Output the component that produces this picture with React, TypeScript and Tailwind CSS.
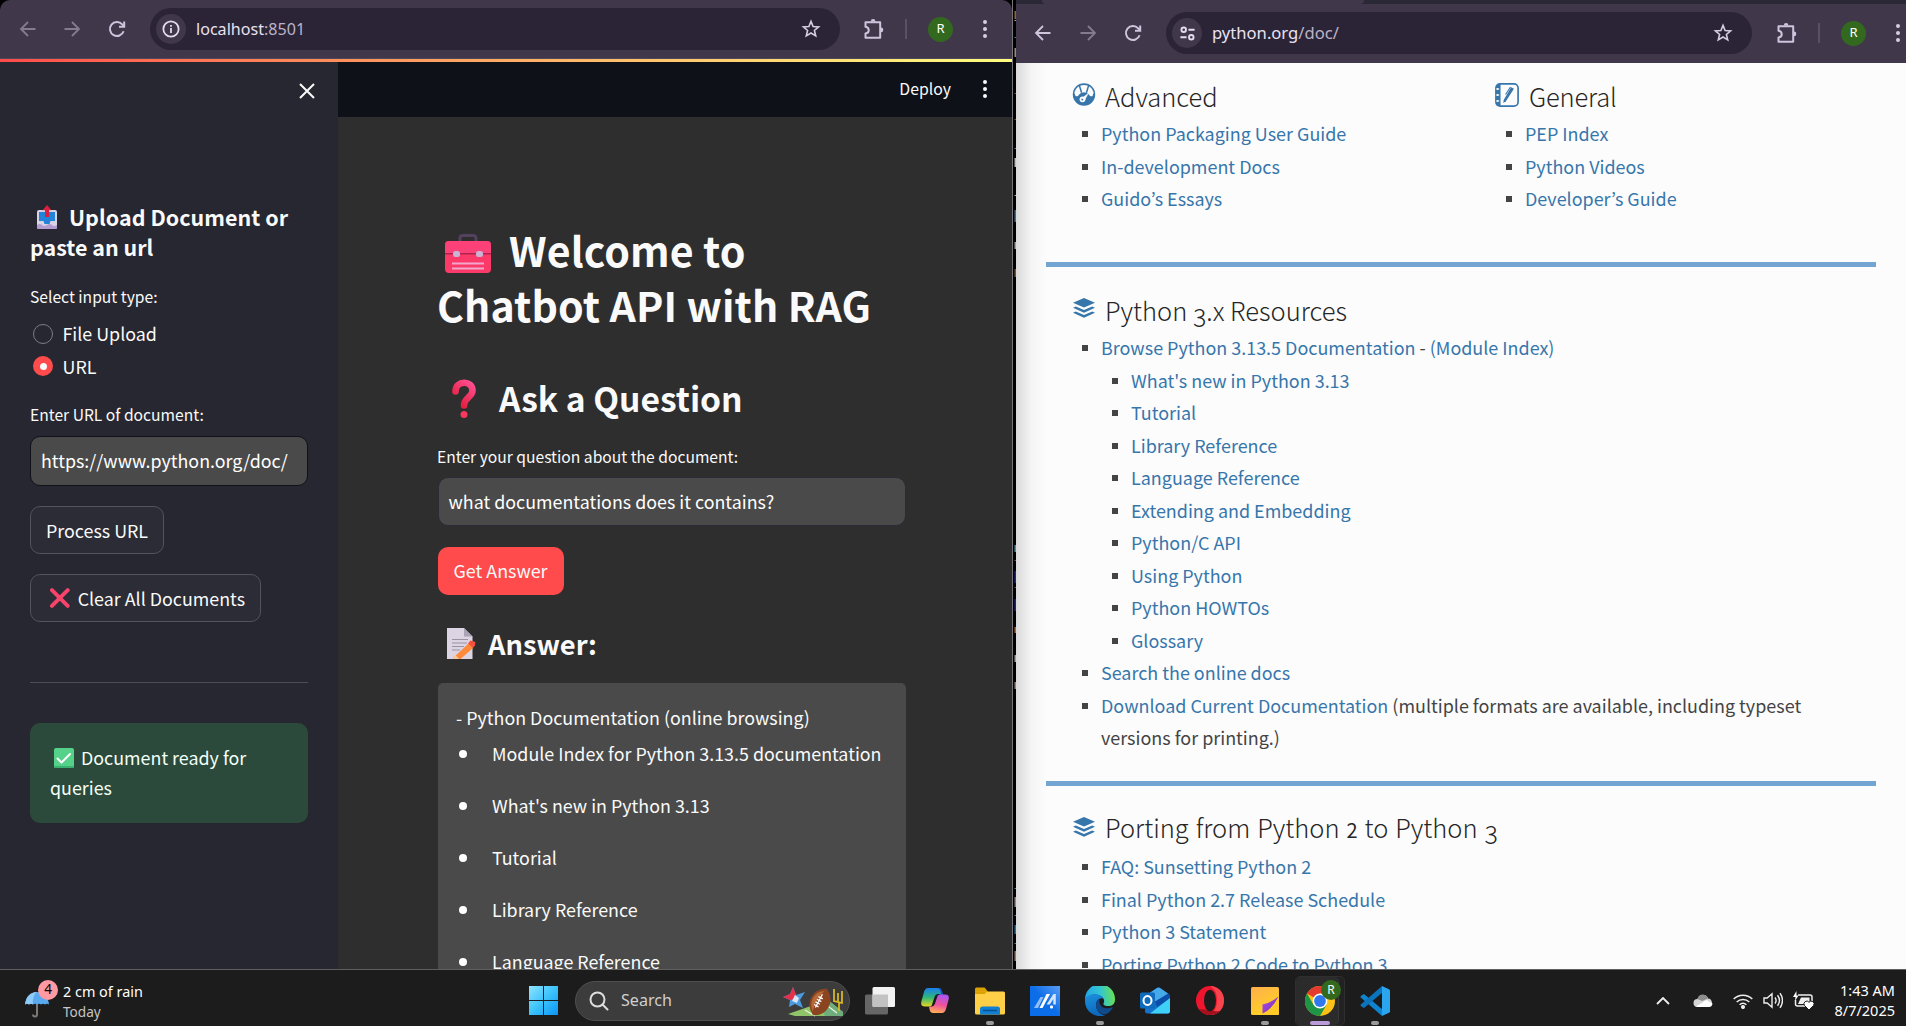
import React from 'react';

const SOURCE = 'font-["Noto_Sans_CJK_KR","Noto_Sans",sans-serif]';
const SEGOE = 'font-["Noto_Sans","Open_Sans",sans-serif]';

/* ---------- browser chrome icons ---------- */

function Arrow({ dim = false, flip = false }: { dim?: boolean; flip?: boolean }) {
  return (
    <svg viewBox="0 0 20 20" className={`size-5 shrink-0 ${dim ? 'text-[#857b90]' : 'text-[#cfc4dc]'} ${flip ? 'rotate-180' : ''}`} fill="none" stroke="currentColor" strokeWidth="1.8">
      <path d="M17.5 10H3.5M10 3L3 10l7 7" />
    </svg>
  );
}

function Reload() {
  return (
    <svg viewBox="0 0 20 20" className="size-5 shrink-0 text-[#cfc4dc]" fill="none" stroke="currentColor" strokeWidth="2">
      <path d="M16.6 12.2A7 7 0 1 1 15.2 5.3L17 7.2" />
      <path d="M17.2 2.6v5.2H12" />
    </svg>
  );
}

function Star() {
  return (
    <svg viewBox="0 0 20 20" className="size-5 shrink-0 text-[#d5cde0]" fill="none" stroke="currentColor" strokeWidth="1.6">
      <path d="M10 2.4l2.1 5.1 5.5.4-4.2 3.6 1.3 5.4-4.7-2.9-4.7 2.9 1.3-5.4-4.2-3.6 5.5-.4z" />
    </svg>
  );
}

function Puzzle() {
  return (
    <svg viewBox="0 0 22 22" className="size-[22px] shrink-0 text-[#cfc4dc]" fill="none" stroke="currentColor" strokeWidth="2" strokeLinejoin="round">
      <path d="M2.5 4.2H17.2V19.8H2.5V15.6C6.8 14.8 6.8 9.6 2.5 8.8Z" />
      <path d="M7.8 3.4a2.3 2.3 0 0 1 4.6 0zM18 9.6a2.3 2.3 0 0 1 0 4.6z" fill="currentColor" stroke="none" />
    </svg>
  );
}

function Dots({ className }: { className: string }) {
  return (
    <svg viewBox="0 0 4 20" className={className} fill="currentColor">
      <circle cx="2" cy="3" r="2" />
      <circle cx="2" cy="10" r="2" />
      <circle cx="2" cy="17" r="2" />
    </svg>
  );
}

function InfoIcon() {
  return (
    <svg viewBox="0 0 20 20" className="size-[18px]" fill="none" stroke="#e4dcec" strokeWidth="2">
      <circle cx="10" cy="10" r="8.5" />
      <path d="M10 9v5.5M10 5.5v2" />
    </svg>
  );
}

function TuneIcon() {
  return (
    <svg viewBox="0 0 18 18" className="size-[17px]" fill="none" stroke="#e4dcec" strokeWidth="2">
      <circle cx="5" cy="5" r="2.4" />
      <path d="M10 5h6.5M1.5 13H8" />
      <circle cx="13" cy="13" r="2.4" />
    </svg>
  );
}

function Omnibox({ host, rest, icon, className }: { host: string; rest: string; icon: React.ReactNode; className: string }) {
  return (
    <div className={`flex h-[42px] items-center rounded-full bg-[#2b2436] pl-[6px] pr-[19px] ${className}`}>
      <div className="flex size-[30px] items-center justify-center rounded-full bg-[#40374b]">{icon}</div>
      <div className={`ml-[10px] flex-1 text-[#e9e2f0] ${SEGOE}`}>
        {host}
        <span className="text-[#bcb2c8]">{rest}</span>
      </div>
      <Star />
    </div>
  );
}

function ToolbarEnd() {
  return (
    <>
      <Puzzle />
      <div className="ml-5 h-5 w-0.5 shrink-0 bg-[#5b5167]" />
      <div className={`ml-[21px] flex size-[25px] shrink-0 items-center justify-center rounded-full bg-[#33691e] text-[13px] text-white ${SEGOE}`}>R</div>
      <Dots className="ml-[30px] h-[20px] w-1 shrink-0 text-[#d5cde0]" />
    </>
  );
}

/* ---------- emoji drawings ---------- */

function Outbox() {
  return (
    <svg viewBox="0 0 20 24" className="ml-[7px] mr-[12px] inline-block h-6 w-5 align-[-3px]">
      <rect y="5" width="20" height="19" rx="2" fill="#d9d3e6" />
      <path d="M2 7h16v9h-4.500l-1 3h-5l-1-3H2z" fill="#2383d8" />
      <path d="M0 20q3-2 5 0t5 0 5 0 5 0v3a1 1 0 0 1-1 1H1a1 1 0 0 1-1-1z" fill="#b39ccf" />
      <path d="M10 0l4.500 5.200h-2.500V12H8V5.200H5.500z" fill="#d9213f" />
    </svg>
  );
}

function Toolbox() {
  return (
    <svg viewBox="0 0 46 40" className="ml-2 mr-[18px] inline-block h-10 w-[46px] align-[-7px]">
      <path d="M15 8V4a2.500 2.500 0 0 1 2.500-2.500h11A2.500 2.500 0 0 1 31 4v4" fill="none" stroke="#54405f" strokeWidth="3" />
      <rect y="7" width="46" height="32" rx="4" fill="#fb3a6a" />
      <path d="M0 11a4 4 0 0 1 4-4h38a4 4 0 0 1 4 4v8H0z" fill="#fc4078" />
      <path d="M0 19h46v1.600H0z" fill="#b3224f" />
      <rect x="8" y="17" width="7" height="6" rx="2.500" fill="#c9b4d4" />
      <rect x="31" y="17" width="7" height="6" rx="2.500" fill="#c9b4d4" />
      <path d="M7 29.500h32M7 34.500h32" stroke="#f4a6cb" strokeWidth="1.800" />
    </svg>
  );
}

function QuestionMark() {
  return (
    <svg viewBox="0 0 24 39" className="ml-[14px] mr-[23px] inline-block h-[39px] w-6 align-[-6px]">
      <defs>
        <linearGradient id="qm" x1="1" y1="0" x2="0.300" y2="1">
          <stop offset="0" stopColor="#ff4f93" />
          <stop offset="1" stopColor="#e31f3d" />
        </linearGradient>
      </defs>
      <path d="M3.500 12.500C3.500 1 20.500 1 20.500 11.500c0 7-8.500 6.500-8.500 15" fill="none" stroke="url(#qm)" strokeWidth="6.600" strokeLinecap="round" />
      <circle cx="12" cy="35.500" r="3.500" fill="#f8385c" />
    </svg>
  );
}

function Memo() {
  return (
    <svg viewBox="0 0 29 32" className="ml-[9px] mr-[12px] inline-block h-8 w-[29px] align-[-5px]">
      <path d="M0 0h17l8.500 8.500V31H0z" fill="#dcd3e3" />
      <path d="M17 0l8.500 8.500H17z" fill="#aaa2b5" />
      <path d="M5 11.500h16M5 15h15M5 18.500h12M5 22h8" stroke="#9a92a5" strokeWidth="1.200" />
      <path d="M21.500 15.500l4.800 4.200L13.500 31H7l-1-1z" fill="#ff8a3c" />
      <path d="M21 15.500l2.500-3 4.900 1.500-.4 3.500-2.200 2.500z" fill="#f4523b" />
      <path d="M6 31l2-4.500 4 4.500z" fill="#f7c9a0" />
    </svg>
  );
}

function CrossMark() {
  return (
    <svg viewBox="0 0 20 20" className="ml-[4px] mr-2 size-5">
      <path d="M2 2l16 16M18 2L2 18" stroke="#f8436b" strokeWidth="4" strokeLinecap="round" />
    </svg>
  );
}

function CheckBox() {
  return (
    <svg viewBox="0 0 20 20" className="ml-1 mr-[7px] inline-block size-5 align-[-3px]">
      <rect width="20" height="20" rx="2" fill="#55d18a" />
      <path d="M0 18h20v1a1 1 0 0 1-1 1H1a1 1 0 0 1-1-1z" fill="#3bb272" />
      <path d="M3.500 10.500l4 4 8.500-8.500" fill="none" stroke="#fff" strokeWidth="2" strokeLinecap="round" strokeLinejoin="round" />
    </svg>
  );
}

/* ---------- chatbot window ---------- */

function Sidebar() {
  return (
    <aside className="flex w-[338px] shrink-0 flex-col bg-[#262730] pl-[30px] pr-[30px] text-[17.86px] text-[#fafafa]">
      <div className="-mr-[9px] flex h-[58px] items-center justify-end">
        <svg viewBox="0 0 20 20" className="size-5" stroke="#fafafa" strokeWidth="2" fill="none">
          <path d="M3 3l14 14M17 3L3 17" />
        </svg>
      </div>
      <h3 className="mt-[82px] whitespace-nowrap text-[21.45px] font-bold leading-[30px]">
        <Outbox />
        <span className="tracking-[0.05px]">Upload Document or</span>
        <br />
        paste an url
      </h3>
      <div className="mt-[23px] text-[15.65px] leading-6">Select input type:</div>
      <div className="mt-[8px] flex h-[33px] items-center pl-[3px]">
        <span className="size-5 rounded-full border border-[#7c7d84] bg-[#262730]" />
        <span className="-mt-px ml-[9.5px] leading-6">File Upload</span>
      </div>
      <div className="flex h-8 items-center pl-[3px]">
        <span className="flex size-5 items-center justify-center rounded-full bg-[#ff4b4b]">
          <span className="size-[7px] rounded-full bg-[#fafafa]" />
        </span>
        <span className="-mt-px ml-[9.5px] leading-6">URL</span>
      </div>
      <div className="mt-[21px] text-[15.65px] leading-6">Enter URL of document:</div>
      <div className="mt-[9px] flex h-[50px] items-center rounded-[10px] border border-[#0e1117] bg-[#4a4a4a] px-[10px] pb-[2px] leading-6 text-white">https://www.python.org/doc/</div>
      <button className="mt-5 flex h-12 w-[134px] items-center whitespace-nowrap rounded-[10px] border border-[#52535b] bg-[#2b2c36] px-[15px] pb-[1px] leading-6">Process URL</button>
      <button className="mt-5 flex h-12 w-[231px] items-center whitespace-nowrap rounded-[10px] border border-[#52535b] bg-[#2b2c36] px-[15px] pb-[1px] leading-6">
        <CrossMark />
        Clear All Documents
      </button>
      <hr className="mt-[60px] border-[#4c4d56]" />
      <div className="mt-10 h-[100px] rounded-[10px] bg-[#2b4a3b] px-5 pt-[19px] leading-[30px] text-[#f4fff8]">
        <CheckBox />
        Document ready for
        <br />
        queries
      </div>
    </aside>
  );
}

const ANSWERS = ['Module Index for Python 3.13.5 documentation', "What's new in Python 3.13", 'Tutorial', 'Library Reference', 'Language Reference'];

function ChatMain() {
  return (
    <main className="flex flex-1 flex-col bg-[#2e2e2e] text-[17.86px] text-[#fafafa]">
      <header className="flex h-[55px] shrink-0 items-center justify-end bg-[#0e1117] pb-[1px] pr-[25px]">
        <span className="text-[15.8px] leading-6">Deploy</span>
        <Dots className="ml-[32px] h-[20px] w-1 text-[#fafafa]" />
      </header>
      <div className="ml-[100px] flex w-[468px] flex-col">
        <h1 className="mt-[105px] -ml-px whitespace-nowrap text-[41.1px] font-bold leading-[55px] tracking-[0.09px]">
          <Toolbox />
          Welcome to
          <br />
          Chatbot API with RAG
        </h1>
        <h2 className="mt-[44px] h-11 whitespace-nowrap text-[33.6px] font-bold leading-[44px]">
          <QuestionMark />
          Ask a Question
        </h2>
        <div className="mt-[25px] -ml-px text-[15.65px] leading-6">Enter your question about the document:</div>
        <div className="mt-[8px] flex h-[49px] items-center rounded-[10px] border border-[#2b2b38] bg-[#4a4a4a] px-[9.5px] pb-[2px] leading-6 text-white">what documentations does it contains?</div>
        <button className="mt-[21px] flex h-12 w-[126px] items-center justify-center rounded-[10px] bg-[#ff4b4b] pb-[2px] pr-[1px] leading-6">Get Answer</button>
        <h3 className="mt-[30px] h-9 text-[27.3px] font-bold leading-9">
          <Memo />
          Answer:
        </h3>
        <div className="mt-[22px] rounded-t-[5px] bg-[#4a4a4a] pl-[18px] pt-[18px] leading-8">
          <p>- Python Documentation (online browsing)</p>
          <ul className="mt-[4px] flex flex-col gap-5">
            {ANSWERS.map((a) => (
              <li key={a} className="flex items-center whitespace-nowrap">
                <span className="ml-[3px] mr-[25px] mt-[2px] size-[8px] shrink-0 rounded-full bg-white" />
                {a}
              </li>
            ))}
          </ul>
        </div>
      </div>
    </main>
  );
}

function ChatWindow() {
  return (
    <section className="flex h-full w-[1013px] shrink-0 flex-col overflow-hidden border-r border-[#77757a]">
      <div className="flex h-[59px] shrink-0 items-center rounded-t-[10px] border-b border-[#4f4858] bg-[#40374b] pl-[18px]">
        <Arrow dim />
        <div className="w-[24px]" />
        <Arrow dim flip />
        <div className="w-[25px]" />
        <Reload />
        <Omnibox className="ml-[23px] w-[690px] text-[16.1px]" host="localhost" rest=":8501" icon={<InfoIcon />} />
        <div className="ml-[23px] flex items-center">
          <ToolbarEnd />
        </div>
      </div>
      <div className="h-[3px] shrink-0 bg-linear-to-r from-[#ff4b4b] to-[#fffd80]" />
      <div className="flex min-h-0 flex-1 overflow-hidden">
        <Sidebar />
        <ChatMain />
      </div>
    </section>
  );
}

/* Thin strip of an editor visible between the two windows. */
function EditorSliver() {
  const marks: [number, number, string][] = [
    [11, 8, '#b07a2c'], [20, 1, '#ccc'], [37, 1, '#4d9dc4'], [48, 9, '#b5a58a'], [93, 1, '#9a5a30'], [119, 1, '#9a5a30'],
    [148, 1, '#4d9dc4'], [158, 9, '#ddd'], [195, 1, '#ccc'], [210, 12, '#4a7f9a'], [242, 7, '#bbb'], [269, 8, '#8a6320'],
    [545, 7, '#4da6c4'], [560, 1, '#9a5a30'], [571, 12, '#2323a8'], [587, 1, '#9a5a30'], [599, 12, '#2323a8'], [627, 6, '#d07028'],
    [655, 7, '#bba'], [682, 7, '#a98'], [888, 1, '#4d9dc4'], [897, 10, '#aaa09a'], [915, 1, '#4d9dc4'], [925, 9, '#1683b8'], [943, 1, '#4d9dc4'], [951, 10, '#b98a70'],
  ];
  return (
    <svg viewBox="0 0 3 969" className="h-full w-[3px] shrink-0 bg-black">
      {marks.map(([y, h, c]) => (
        <rect key={y} x="1.500" y={y} width="1.500" height={h} fill={c} opacity="0.850" />
      ))}
    </svg>
  );
}

/* ---------- python.org window ---------- */

function GaugeIcon() {
  return (
    <svg viewBox="0 0 24 24" className="size-[24px]">
      <circle cx="12" cy="11.500" r="11.200" fill="#3776ab" />
      <path d="M2.300 9.500A10 10 0 0 1 21.700 9.500L20.500 13Q18 14 17.300 12 15.500 9.200 12 9.200T6.700 12Q6 14 3.500 13z" fill="#fcfcfc" />
      <path d="M7.300 2.200l2.300 7.600M16.700 2.200l-2.300 7.600" stroke="#3776ab" strokeWidth="1.500" />
      <circle cx="10.500" cy="16.300" r="2.900" fill="#fcfcfc" />
      <circle cx="10.300" cy="16.500" r="1" fill="#3776ab" />
      <path d="M17 9.500l-4.300 8-2.800-2.500z" fill="#fcfcfc" />
    </svg>
  );
}

function NotebookIcon() {
  return (
    <svg viewBox="0 0 26 26" className="size-[26px]">
      <rect x="1" y="1" width="24" height="24" rx="4.500" fill="#fcfcfc" stroke="#3776ab" strokeWidth="1.800" />
      <path d="M5 1h1v24H5A4 4 0 0 1 1 21V5a4 4 0 0 1 4-4z" fill="#3776ab" />
      <path d="M1 6.500h3.500M1 13h3.500M1 19.500h3.500M3 5.300v2.400M3 11.800v2.400M3 18.300v2.400" stroke="#fcfcfc" strokeWidth="1.300" />
      <path d="M17.500 4.500l3 1.700-8.700 13.600-2.800 2 .4-3.500z" fill="#3776ab" />
      <path d="M16.800 4.300L11.500 12.500" stroke="#3776ab" strokeWidth="1.200" />
    </svg>
  );
}

function StackIcon() {
  return (
    <svg viewBox="0 0 24 24" className="h-[24px] w-[24px]" fill="#3776ab">
      <path d="M12 1l11 4.800-11 4.800L1 5.800z" />
      <path d="M1 10.800l2.800-1.200L12 13l8.200-3.400L23 10.800 12 15.800z" />
      <path d="M1 15.800l2.800-1.300L12 18l8.200-3.500L23 15.800 12 20.700z" />
    </svg>
  );
}

/* Old-style three: full height, hanging below the baseline. */
function Three() {
  return <span className="relative top-[6px] text-[25px]">3</span>;
}

function Heading({ icon, children }: { icon: React.ReactNode; children: React.ReactNode }) {
  return (
    <h2 className="flex h-9 items-center text-[25.5px] font-light leading-9 text-[#262626]">
      <span className="mr-[9px] flex w-6 justify-center">{icon}</span>
      <span className="mt-[2px] whitespace-pre">{children}</span>
    </h2>
  );
}

function Item({ children, nested = false }: { children: React.ReactNode; nested?: boolean }) {
  return (
    <li className={`flex text-[#3776ab] ${nested ? 'pl-10' : 'pl-[10px]'}`}>
      <span className="mr-[13px] mt-[14px] size-[6px] shrink-0 bg-[#444]" />
      <span>{children}</span>
    </li>
  );
}

const NESTED = ["What's new in Python 3.13", 'Tutorial', 'Library Reference', 'Language Reference', 'Extending and Embedding', 'Python/C API', 'Using Python', 'Python HOWTOs', 'Glossary'];

function PythonWindow() {
  return (
    <section className="flex h-full flex-1 flex-col overflow-hidden">
      <div className="h-[4px] shrink-0 bg-[#2b2835] pl-[26px] pr-[542px]">
        <div className="h-full rounded-b-sm bg-[#40374b]" />
      </div>
      <div className="flex h-[59px] shrink-0 items-center bg-[#40374b] pb-[1px] pl-[17px]">
        <Arrow />
        <div className="w-[25px]" />
        <Arrow dim flip />
        <div className="w-[25px]" />
        <Reload />
        <Omnibox className="ml-[23px] w-[586px] shrink-0 text-[16.6px]" host="python.org" rest="/doc/" icon={<TuneIcon />} />
        <div className="ml-[24px] flex items-center">
          <ToolbarEnd />
        </div>
      </div>
      <div className="flex min-h-0 flex-1 bg-[#fcfcfc]">
        <div className="w-[30px] shrink-0 bg-linear-to-r from-[#d9d9d9] via-[#f4f4f4] to-[#fcfcfc]" />
        <div className="flex w-[830px] shrink-0 flex-col text-[17.94px] leading-[32.5px]">
          <div className="mt-[14px] flex shrink-0 pl-[26px]">
            <div className="w-[423px]">
              <Heading icon={<GaugeIcon />}>Advanced</Heading>
              <ul className="mt-[4px]">
                <Item>Python Packaging User Guide</Item>
                <Item>In-development Docs</Item>
                <Item>Guido’s Essays</Item>
              </ul>
            </div>
            <div>
              <Heading icon={<NotebookIcon />}>
                <span className="ml-[1px] -tracking-[0.2px]">General</span>
              </Heading>
              <ul className="mt-[4px] pl-[1px]">
                <Item>PEP Index</Item>
                <Item>Python Videos</Item>
                <Item>Developer’s Guide</Item>
              </ul>
            </div>
          </div>
          <div className="mt-[47.5px] h-[5px] shrink-0 bg-[#73a5d3]" />
          <div className="mt-[24px] shrink-0 pl-[26px]">
            <Heading icon={<StackIcon />}>
              Python <Three />.x Resources
            </Heading>
            <ul className="mt-[4.4px]">
              <Item>
                Browse Python 3.13.5 Documentation <span className="text-[#444]">-</span> (Module Index)
              </Item>
              {NESTED.map((t) => (
                <Item key={t} nested>
                  {t}
                </Item>
              ))}
              <Item>Search the online docs</Item>
              <Item>
                Download Current Documentation{' '}
                <span className="text-[#444]">
                  (multiple formats are available, including typeset
                  <br />
                  versions for printing.)
                </span>
              </Item>
            </ul>
          </div>
          <div className="mt-[27.1px] h-[5px] shrink-0 bg-[#73a5d3]" />
          <div className="mt-[24px] shrink-0 pl-[26px]">
            <Heading icon={<StackIcon />}>
              <span className="[word-spacing:1.3px]">
                Porting from Python <span className="text-[20px] font-normal">2</span> to Python <Three />
              </span>
            </Heading>
            <ul className="mt-[4.4px]">
              <Item>FAQ: Sunsetting Python 2</Item>
              <Item>Final Python 2.7 Release Schedule</Item>
              <Item>Python 3 Statement</Item>
              <Item>Porting Python 2 Code to Python 3</Item>
            </ul>
          </div>
        </div>
      </div>
    </section>
  );
}

/* ---------- taskbar ---------- */

function WindowsLogo() {
  return (
    <svg viewBox="0 0 29 29" className="size-[29px]">
      <defs>
        <linearGradient id="win" gradientUnits="userSpaceOnUse" x1="0" y1="0" x2="29" y2="29">
          <stop offset="0" stopColor="#8fe3ff" />
          <stop offset="0.500" stopColor="#3cc3fb" />
          <stop offset="1" stopColor="#0a95f5" />
        </linearGradient>
      </defs>
      <path d="M0 0h14v14H0zM15 0h14v14H15zM0 15h14v14H0zM15 15h14v14H15z" fill="url(#win)" />
    </svg>
  );
}

function FootballArt() {
  return (
    <svg viewBox="0 0 62 32" className="h-8 w-[62px]">
      <path d="M5 29l40-14 15 12v4H12z" fill="#8fc46a" />
      <path d="M45 15l15 12v4H42l-6-12z" fill="#6fae7c" />
      <path d="M22 25l10 6M42 19l12 9" stroke="#e8f6dc" strokeWidth="1.200" />
      <path d="M10 2l3 8 9-3-5 8 3 8-8-4-6 3 1-7-7-3 7-3z" fill="#4a9be0" />
      <path d="M10 2l3 8-2 4-4 1-7-3 7-3z" fill="#e33149" />
      <path d="M12 10l4 3-2 5-5-2z" fill="#dbe4f3" />
      <g transform="rotate(-62 37 17)">
        <path d="M22 17Q28 6.500 38 7t14 10Q46 27.500 36 27T22 17z" fill="#8b4420" />
        <path d="M25 15Q31 8.500 38 9t11 7Q40 11.500 25 15z" fill="#b66a39" />
        <path d="M30 15.500h15M32 13v5M35 13v5M38 13v5M41 13v5" stroke="#fff" strokeWidth="1.300" />
      </g>
      <path d="M51 4v12l8 2V6M55 8v9M56 17v9" fill="none" stroke="#e0bd25" strokeWidth="1.700" />
    </svg>
  );
}

function TaskView() {
  return (
    <svg viewBox="0 0 30 28" className="h-7 w-[30px]">
      <rect y="7.500" width="23" height="20" rx="1.500" fill="#666" />
      <rect x="7.500" width="22.500" height="20" rx="1.500" fill="#f2f2f2" />
      <path d="M7.500 7.500H23v12.500H9a1.500 1.500 0 0 1-1.500-1.500z" fill="#c2c2c2" />
    </svg>
  );
}

function Copilot() {
  return (
    <svg viewBox="0 0 28 25" className="h-[25px] w-7">
      <defs>
        <linearGradient id="cpa" x1="0" y1="0" x2="0" y2="1">
          <stop offset="0" stopColor="#1a7ff0" />
          <stop offset="0.500" stopColor="#2cb67c" />
          <stop offset="1" stopColor="#e9d520" />
        </linearGradient>
        <linearGradient id="cpb" x1="0.600" y1="0" x2="0.400" y2="1">
          <stop offset="0" stopColor="#a955f0" />
          <stop offset="0.550" stopColor="#f0529b" />
          <stop offset="1" stopColor="#ffb057" />
        </linearGradient>
      </defs>
      <path d="M10 7h9l-1-4Q17 .500 15 .500l4-.500q1 0 2 3l1.500 4.500z" fill="#1554c0" />
      <path d="M7 0h9q2.500 0 3.300 3L20 6h-3q-2.500 0-3.500 3l-2.600 8q-.700 1.500-2.500 1.500H4Q-1 18.500.500 13L3 4Q4.200 0 7 0z" fill="url(#cpa)" />
      <path d="M21 25h-9q-2.500 0-3.300-3L8 18.500h2.500q2.500 0 3.500-3l2.600-7.500Q17.300 6.500 19 6.500h5Q29 6.500 27.500 12L25 21q-1.200 4-4 4z" fill="url(#cpb)" />
    </svg>
  );
}

function Folder() {
  return (
    <svg viewBox="0 0 30 28" className="h-7 w-[30px]">
      <path d="M0 2a1.500 1.500 0 0 1 1.500-1.500h8L12.500 4v4H0z" fill="#dba100" />
      <rect y="4.500" width="30" height="23" rx="1.500" fill="#ffcf48" />
      <path d="M0 7h9.500l3-2.800H0z" fill="#dba100" />
      <path d="M5 27.500V22a2.500 2.500 0 0 1 2.500-2.500h15A2.500 2.500 0 0 1 25 22v5.500z" fill="#1180d2" />
      <path d="M8 23.500h14" stroke="#0a4f93" strokeWidth="1.500" />
    </svg>
  );
}

function Armoury() {
  return (
    <svg viewBox="0 0 30 30" className="size-[30px]">
      <defs>
        <linearGradient id="arm" x1="0" y1="1" x2="1" y2="0">
          <stop offset="0.500" stopColor="#0b6de8" />
          <stop offset="1" stopColor="#5b9df5" />
        </linearGradient>
      </defs>
      <rect width="30" height="30" fill="url(#arm)" />
      <path d="M4 22L10.500 11h3L8 22z" fill="#8fbdf8" />
      <path d="M9.500 22l7-14H20l-7.500 14z" fill="#fff" />
      <path d="M16.500 18.500L23.500 8h2.300v10.500h-2.500V13l-3.500 5.500z" fill="#d3e4fc" />
      <rect x="20" y="19.500" width="3" height="3" rx="1" fill="#fff" />
    </svg>
  );
}

function Edge() {
  return (
    <svg viewBox="0 0 30 30" className="size-[30px]">
      <defs>
        <linearGradient id="ega" x1="0" y1="0.500" x2="1" y2="0.400">
          <stop offset="0" stopColor="#22a5e6" />
          <stop offset="0.500" stopColor="#32c3d4" />
          <stop offset="1" stopColor="#69e34d" />
        </linearGradient>
        <linearGradient id="egb" x1="0" y1="0" x2="0.300" y2="1">
          <stop offset="0" stopColor="#1c93df" />
          <stop offset="1" stopColor="#0d67bd" />
        </linearGradient>
      </defs>
      <path d="M0 13A15 15 0 0 1 30 13.500C30 19 26 20 23.500 20 20 20 18 19 18.500 17.500 21 13 16 8.500 10 8.500 5 8.500 1 11 0 15z" fill="url(#ega)" />
      <path d="M0 15C0 10.500 5 8.300 9.500 8.300c5.500 0 8.500 2.500 8.800 4.200C14 11.500 11 15 11 19c0 6 5 10 9 10.300A15 15 0 0 1 0 15z" fill="url(#egb)" />
      <path d="M14.500 12.500C12 14 11 16.500 11 19c0 5 4 8.500 8 9.500 4-.5 7.500-4 8.500-6.500.4-.8-.4-1-1-.6-6 2.600-13.500.1-12-8.900z" fill="#114a8b" />
    </svg>
  );
}

function Outlook() {
  return (
    <svg viewBox="0 0 30 27" className="h-[27px] w-[30px]">
      <path d="M5 9L17 1q1.500-1 3 0l10 7v16a2.500 2.500 0 0 1-2.500 2.500h-20A2.500 2.500 0 0 1 5 24z" fill="#1272cd" />
      <path d="M5 9L17 1q1.500-1 3 0l8 5.500L15 15z" fill="#45a9ea" />
      <path d="M15 14.500L28.500 6.500 30 8v3.500L17 20z" fill="#0b4da8" />
      <path d="M30 11v13a2.500 2.500 0 0 1-2.500 2.500H10z" fill="#3fd0f7" />
      <rect y="5.500" width="15" height="16" rx="1.500" fill="#0f6cbd" />
      <ellipse cx="7.500" cy="13.500" rx="4" ry="4.500" fill="none" stroke="#fff" strokeWidth="2" />
    </svg>
  );
}

function Opera() {
  return (
    <svg viewBox="0 0 28 29" className="h-[29px] w-7">
      <ellipse cx="14" cy="14.500" rx="14" ry="14.500" fill="#f0152e" />
      <path d="M14 0q6 0 10.500 4.500Q28 9 28 14.500T24.500 24.500Q20 29 14 29q7-4 7-14.500T14 0z" fill="#f8444c" />
      <path d="M3 23q4.500 6 11 6 6 0 10-4-6 1-9.500-1z" fill="#a6101c" />
      <ellipse cx="14" cy="14.500" rx="6" ry="10.800" fill="#1c1c1c" />
    </svg>
  );
}

function StickyNote() {
  return (
    <svg viewBox="0 0 28 28" className="size-7">
      <defs>
        <linearGradient id="stk" x1="0" y1="0" x2="0.500" y2="1">
          <stop offset="0" stopColor="#ffaf4a" />
          <stop offset="1" stopColor="#ffd226" />
        </linearGradient>
        <linearGradient id="stp" x1="0" y1="0" x2="1" y2="1">
          <stop offset="0" stopColor="#b84cf0" />
          <stop offset="1" stopColor="#6b2fa8" />
        </linearGradient>
      </defs>
      <rect width="28" height="28" rx="1.500" fill="url(#stk)" />
      <path d="M28 10v16.500a1.500 1.500 0 0 1-1.500 1.500H12q11-6 16-18z" fill="#ffc928" />
      <path d="M27.500 9.500Q18 17 11.500 17.500v9q10-4.500 16-17z" fill="url(#stp)" />
    </svg>
  );
}

function Chrome() {
  return (
    <svg viewBox="0 0 30 30" className="size-[30px] shrink-0">
      <circle cx="15" cy="15" r="15" fill="#fbc116" />
      <path d="M15 15L2 7.500A15 15 0 0 1 28 7.500H15z" fill="#e33b2e" />
      <path d="M2 7.500A15 15 0 0 0 15 30l6.500-11.300L15 15 8.500 18.700z" fill="#1e9447" />
      <circle cx="15" cy="15" r="7.400" fill="#fff" />
      <circle cx="15" cy="15" r="5.900" fill="#2f78ee" />
    </svg>
  );
}

function VsCode() {
  return (
    <svg viewBox="0 0 30 30" className="size-[30px]">
      <path d="M1.500 9.500L4 8l18.500 15.500L22 30 .800 11.500q-.8-1 .7-2z" fill="#0e83cf" />
      <path d="M1.500 20.500L4 22 22.500 6.500 22 0 .800 18.500q-.8 1 .7 2z" fill="#0a74bd" />
      <path d="M22 0l7 3.200q1 .5 1 1.600v20.400q0 1.100-1 1.600L22 30z" fill="#2aa5ee" />
    </svg>
  );
}

function Umbrella() {
  return (
    <svg viewBox="0 0 24 26" className="h-[26px] w-6">
      <path d="M12 11v11.500q0 2-2 2t-2-2" fill="none" stroke="#7d7977" strokeWidth="2" />
      <path d="M12 0q10.500.500 12 12.500-2-1.500-4 0-2-1.500-4 0-2-1.500-4 0-2-1.500-4 0-2-1.500-4 0-2-1.500-4 0Q1.500.500 12 0z" fill="#58a9ee" />
      <path d="M12 0Q7 4 8 12.500q-2-1.500-4 0-2-1.500-4 0Q1.500.500 12 0z" fill="#8ecbf8" />
    </svg>
  );
}

function PinnedApp({ icon, running = false }: { icon: React.ReactNode; running?: boolean }) {
  return (
    <div className="flex h-[50px] w-[55px] flex-col items-center">
      <div className="flex h-[50px] items-center">{icon}</div>
      <div className={`-mt-[5px] h-1 w-2 shrink-0 rounded-full ${running ? 'bg-[#9a9a9a]' : ''}`} />
    </div>
  );
}

function Tray() {
  return (
    <>
      <svg viewBox="0 0 14 8" className="h-2 w-[14px]" fill="none" stroke="#eee" strokeWidth="1.800">
        <path d="M1 7l6-6 6 6" />
      </svg>
      <svg viewBox="0 0 20 13" className="ml-[23px] h-[13px] w-5">
        <path d="M4.500 5A5.500 5.500 0 0 1 15 4.500 4.300 4.300 0 0 1 15.500 13h-11a4 4 0 0 1 0-8z" fill="#d5d5d5" />
        <path d="M4.500 5A5.500 5.500 0 0 1 15 4.500L9 7z" fill="#8d8d8d" />
        <path d="M3 12.500L13.500 6l6 3.500q-.5 3.500-4 3.500h-11z" fill="#fff" />
      </svg>
      <svg viewBox="0 0 20 16" className="ml-5 h-4 w-5" fill="none" stroke="#eee" strokeWidth="1.500">
        <path d="M.700 6a13.200 13.200 0 0 1 18.600 0M3.700 9a9 9 0 0 1 12.600 0M6.600 11.700a5 5 0 0 1 6.800 0" />
        <circle cx="10" cy="14" r="1.300" fill="#eee" />
      </svg>
      <svg viewBox="0 0 20 17" className="ml-[10px] h-[17px] w-5" fill="none" stroke="#eee" strokeWidth="1.400">
        <path d="M1 6h3.200L9 1.800v13.400L4.200 11H1zM12 5.500q2.200 3 0 6M14.500 3.300q4 5.200 0 10.400M17 1.200q5 7.300 0 14.600" />
      </svg>
      <svg viewBox="0 0 21 19" className="ml-[10px] h-[19px] w-[21px]">
        <path d="M5 4h12q2 0 2 2v7q0 2-2 2H4.500q-2 0-2-2V9" fill="none" stroke="#eee" strokeWidth="1.500" />
        <path d="M5 13L8 6.500h8.500v6.500z" fill="#eee" />
        <path d="M3.500 0L0 6h2.500L2 10l3.500-5.500H3.500z" fill="#fff" />
        <path d="M16 19l-4.500-4.500a2.700 2.700 0 0 1 4.500-3.200 2.700 2.700 0 0 1 4.500 3.200z" fill="#fff" stroke="#1c1c1c" />
      </svg>
    </>
  );
}

function Taskbar() {
  return (
    <footer className={`flex h-[57px] items-center border-t border-[#5f5f5f] bg-[#1c1c1c] pb-[1px] pt-[6px] ${SEGOE}`}>
      <div className="flex w-[529px] items-center self-start pl-[25px] pt-[2px]">
        <div className="relative h-[40px] w-[33px] pt-[12px]">
          <Umbrella />
          <span className="absolute left-[13px] top-0 flex size-5 items-center justify-center rounded-full bg-[#ff99a4] text-[13.5px] leading-none text-black">4</span>
        </div>
        <div className="ml-[5px] mt-[4px] text-[14.4px] leading-5 text-white">
          2 cm of rain
          <div className="text-[13.6px] text-[#c5c5c5]">Today</div>
        </div>
      </div>
      <WindowsLogo />
      <div className="ml-[17px] flex h-10 w-[275px] items-center rounded-full border border-[#4f4f4f] bg-[#3c3c3c] pl-[13px]">
        <svg viewBox="0 0 20 20" className="size-5" fill="none" stroke="#ddd" strokeWidth="2">
          <circle cx="8.500" cy="8.500" r="7" />
          <path d="M13.500 13.500l5 5" strokeLinecap="round" />
        </svg>
        <span className="ml-[12px] w-[162px] text-[16.1px] text-[#cfcfcf]">Search</span>
        <FootballArt />
      </div>
      <div className="ml-[2px] flex items-center">
        <PinnedApp icon={<TaskView />} />
        <PinnedApp icon={<Copilot />} />
        <PinnedApp icon={<Folder />} running />
        <PinnedApp icon={<Armoury />} />
        <PinnedApp icon={<Edge />} running />
        <PinnedApp icon={<Outlook />} />
        <PinnedApp icon={<Opera />} />
        <PinnedApp icon={<StickyNote />} running />
        <div className="w-[55px] pl-[3px]">
          <div className="w-[50px] rounded-[5px] border border-[#2f2f2f] bg-[#222] pr-[5px]">
            <div className="relative flex h-[48px] w-[43px] flex-col items-center rounded-[5px] border-r border-[#383838] bg-[#2b2b2b] pl-[6px]">
              <div className="flex h-[48px] items-center">
                <Chrome />
              </div>
              <div className="-mt-[4px] h-1 w-5 shrink-0 rounded-full bg-[#bb9bd8]" />
              <span className="absolute left-[25px] top-[3px] flex size-5 items-center justify-center rounded-full bg-[#33691e] text-[12px] leading-none text-white">R</span>
            </div>
          </div>
        </div>
        <PinnedApp icon={<VsCode />} running />
      </div>
      <div className="flex flex-1 items-center justify-end pr-[11px]">
        <Tray />
        <div className="-mt-[2px] ml-[10px] w-[71px] text-right text-[14.5px] leading-5 text-white">
          1:43 AM
          <br />
          8/7/2025
        </div>
      </div>
    </footer>
  );
}

export default function App() {
  return (
    <div className={`flex h-[1026px] w-[1906px] flex-col overflow-hidden bg-black ${SOURCE}`}>
      <div className="flex h-[969px] shrink-0">
        <ChatWindow />
        <EditorSliver />
        <PythonWindow />
      </div>
      <Taskbar />
    </div>
  );
}
